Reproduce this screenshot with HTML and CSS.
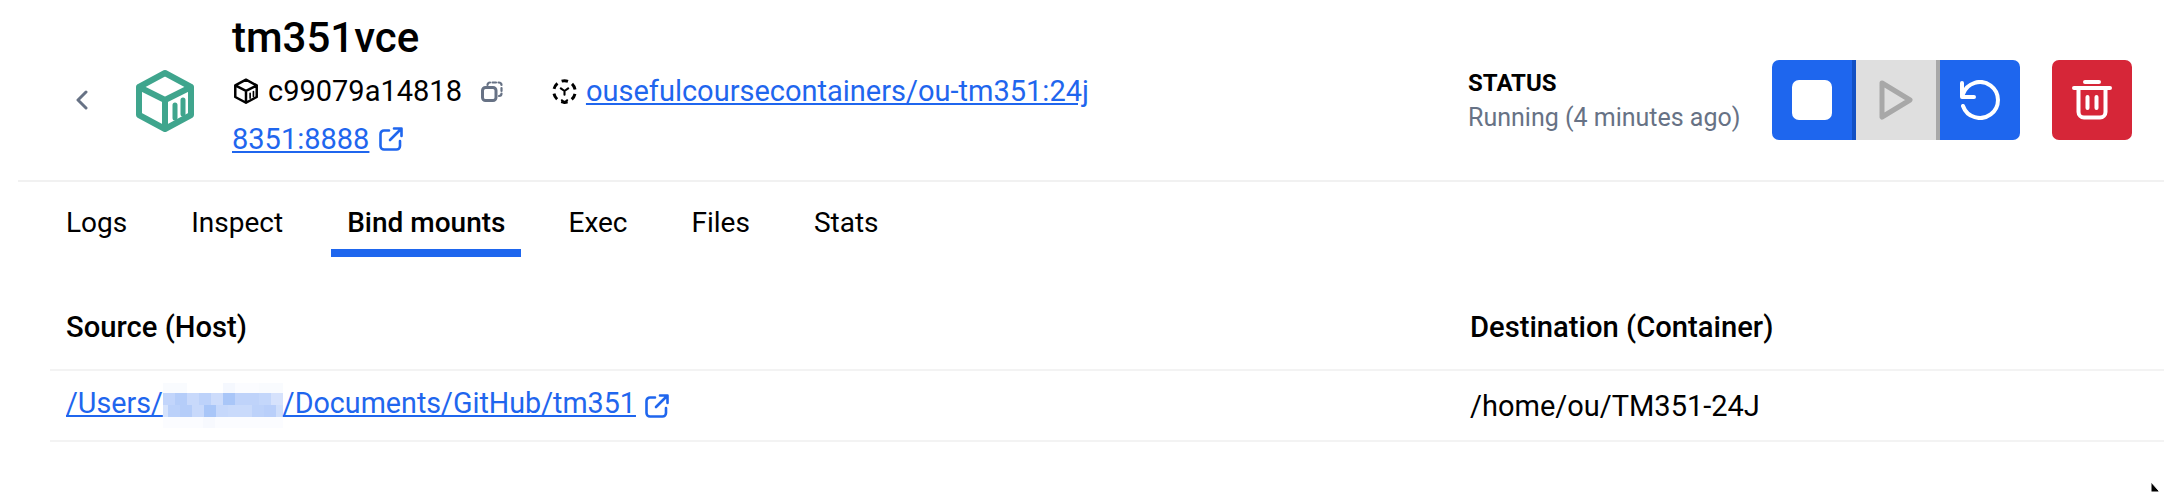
FILE: index.html
```html
<!DOCTYPE html>
<html lang="en">
<head>
	<meta charset="UTF-8">
	<title>tm351vce</title>
	<link rel="stylesheet" href="styles.css">
</head>
<body>
	<header class="top">
		<button class="back" aria-label="Back">
			<svg width="12" height="20" viewBox="0 0 12 20"><path d="M10 2 L2 10 L10 18" class="line"/></svg>
		</button>
		<svg class="box-icon" width="58" height="63" viewBox="0 0 58 63">
			<path d="M29 4 L55 18 V46 L29 60 L3 46 V18 Z M3 18 L29 31 L55 18 M29 31 V60" class="line"/>
			<path d="M39 36 V49 M47 31 V45" class="line bars"/>
		</svg>
		<div class="info">
			<h1>tm351vce</h1>
			<div class="meta">
				<svg class="cube" width="24" height="26" viewBox="0 0 58 63">
					<path d="M29 4 L55 18 V46 L29 60 L3 46 V18 Z M3 18 L29 31 L55 18 M29 31 V60" class="line"/>
					<path d="M39 37 V49 M47 33 V45" class="line thin"/>
				</svg>
				<span class="cid">c99079a14818</span>
				<svg class="copy" width="22" height="21" viewBox="0 0 22 21">
					<rect x="1.5" y="6.5" width="13.5" height="13" rx="3" class="line"/>
					<path d="M6.5 4 Q6.7 1.5 9 1.5 M11.5 1.5 H15 M17.5 1.5 Q20.5 1.5 20.5 4 M20.5 7 V10 M20.5 12.5 Q20.5 15 18 15" class="line dash-back"/>
				</svg>
				<svg class="ref" width="25" height="25" viewBox="0 0 24 24">
					<circle cx="12" cy="12" r="10.3" class="line dashed"/>
					<path d="M8.5 9 L12 11.5 L15.5 9 M12 11.5 V15 M9.5 20.5 L12 23 L14.5 20.5" class="line thin"/>
				</svg>
				<a href="#">ousefulcoursecontainers/ou-tm351:24j</a>
			</div>
			<div class="ports">
				<a href="#">8351:8888</a>
				<svg class="ext" width="24" height="24" viewBox="0 0 24 24"><use href="#ext-mark"/></svg>
			</div>
		</div>
		<div class="status">
			<strong>STATUS</strong>
			<span>Running (4 minutes ago)</span>
		</div>
		<div class="actions">
			<button class="seg stop" aria-label="Stop"><span class="square"></span></button>
			<button class="seg play" aria-label="Start">
				<svg width="36" height="42" viewBox="0 0 36 42"><path d="M4 4 L32 21 L4 38 Z" class="line"/></svg>
			</button>
			<button class="seg restart" aria-label="Restart">
				<svg width="42" height="40" viewBox="0 0 42 40"><path d="M4 14 A18 18 0 1 1 4 26 M3 3 V17 H15" class="line"/></svg>
			</button>
		</div>
		<button class="trash" aria-label="Delete">
			<svg width="40" height="40" viewBox="0 0 40 40"><path d="M2 8 H38 M13 2 H27 M6.5 8 V32 A5.5 5.5 0 0 0 12 37.5 H28 A5.5 5.5 0 0 0 33.5 32 V8 M15.5 17 V28 M24.5 17 V28" class="line"/></svg>
		</button>
	</header>

	<nav class="tabs">
		<a href="#">Logs</a>
		<a href="#">Inspect</a>
		<a href="#" class="active">Bind mounts</a>
		<a href="#">Exec</a>
		<a href="#">Files</a>
		<a href="#">Stats</a>
	</nav>

	<section class="mounts">
		<div class="row head">
			<div>Source (Host)</div>
			<div>Destination (Container)</div>
		</div>
		<div class="row">
			<div class="src">
				<a href="#">/Users/<span class="blur"></span>/Documents/GitHub/tm351</a>
				<svg class="ext" width="24" height="24" viewBox="0 0 24 24"><use href="#ext-mark"/></svg>
			</div>
			<div>/home/ou/TM351-24J</div>
		</div>
	</section>

	<svg class="cursor" width="12" height="10" viewBox="0 0 12 10"><path d="M1 0 L9 9 V10 H1 Z" fill="#000" stroke="#fff"/></svg>

	<svg width="0" height="0" class="defs">
		<symbol id="ext-mark" viewBox="0 0 24 24">
			<path d="M10 3.5 H5 A3.5 3.5 0 0 0 1.5 7 V19 A3.5 3.5 0 0 0 5 22.5 H17.5 A3.5 3.5 0 0 0 21 19 V14 M11 13 L22 2 M15 1.5 H22.5 V9" fill="none" stroke="#1f66ee" stroke-width="2.6" stroke-linecap="round" stroke-linejoin="round"/>
		</symbol>
	</svg>
</body>
</html>
```

FILE: styles.css
```css
* {
	box-sizing: border-box;
}
body {
	margin: 0;
	background: #fff;
	color: #000;
	font-family: Roboto, "Liberation Sans", sans-serif;
	font-size: 29px;
	overflow: hidden;
}
a {
	color: #1f66ee;
}
button {
	border: 0;
	padding: 0;
	background: none;
	display: flex;
	align-items: center;
	justify-content: center;
}
.line {
	fill: none;
	stroke: currentColor;
	stroke-width: 3;
	stroke-linecap: round;
	stroke-linejoin: round;
}

/* header */
.top {
	display: flex;
	align-items: center;
	height: 182px;
	margin-left: 18px;
	padding: 20px 32px 0 0;
	border-bottom: 2px solid #f1f1f1;
}
.back {
	width: 12px;
	margin-left: 58px;
	color: #677285;
}
.box-icon {
	margin-left: 48px;
	color: #3fa58d;
}
.box-icon .line {
	stroke-width: 6;
}
.box-icon .bars {
	stroke-width: 5;
}
.info {
	align-self: flex-start;
	width: 1236px;
	margin: -6px 0 0 38px;
}
h1 {
	margin: 0 0 5px;
	font-size: 42px;
	font-weight: 500;
	line-height: 48px;
}
.meta, .ports {
	display: flex;
	align-items: center;
	height: 48px;
}
.cube {
	margin: 0 10px 0 2px;
}
.cube .line {
	stroke-width: 6;
}
.cube .thin {
	stroke-width: 4;
}
.copy {
	margin-left: 19px;
	color: #677285;
}
.copy .dash-back {
	stroke-width: 2.2;
}
.ref {
	margin: 0 9px 0 49px;
}
.ref .dashed {
	stroke-width: 2.8;
	stroke-linecap: butt;
	stroke-dasharray: 6.2 4.58;
	stroke-dashoffset: -2.3;
}
.ref .thin {
	stroke-width: 2;
}
.ext {
	flex: none;
}
.ports .ext {
	margin-left: 10px;
}
.status {
	display: flex;
	flex-direction: column;
	gap: 6px;
	width: 304px;
}
.status strong {
	font-size: 24px;
	font-weight: 700;
}
.status span {
	font-size: 25px;
	color: #677285;
}
.actions {
	display: flex;
	height: 80px;
	border-radius: 7px;
	overflow: hidden;
}
.seg {
	width: 84px;
	background: #1e66ee;
	color: #fff;
	border-right: 4px solid #1250c4;
}
.seg.play {
	background: #dfdfdf;
	color: #a8a8a8;
	border-right-color: #a8a8a8;
}
.seg.play .line {
	stroke-width: 5;
}
.seg.restart {
	width: 80px;
	border-right: 0;
}
.seg.restart .line {
	stroke-width: 4;
}
.square {
	width: 40px;
	height: 40px;
	border-radius: 7px;
	background: #fff;
}
.trash {
	width: 80px;
	height: 80px;
	margin-left: 32px;
	border-radius: 7px;
	background: #d62638;
	color: #fff;
}
.trash .line {
	stroke-width: 4;
}

/* tabs */
.tabs {
	display: flex;
	gap: 32px;
	height: 75px;
	padding-left: 50px;
	font-size: 28px;
}
.tabs a {
	padding: 23px 16px 0;
	line-height: 36px;
	color: #000;
	text-decoration: none;
	border-bottom: 8px solid transparent;
}
.tabs a.active {
	margin-right: -1px;
	font-weight: 500;
	border-bottom-color: #1e66ee;
}

/* bind mounts table */
.mounts {
	margin-left: 50px;
}
.row {
	display: grid;
	grid-template-columns: 1404px 1fr;
	align-items: center;
	height: 71px;
	padding-left: 16px;
	border-bottom: 2px solid #f3f3f3;
}
.row.head {
	height: 114px;
	padding-top: 28px;
	font-size: 29.2px;
	font-weight: 500;
}
.src {
	display: flex;
	align-items: center;
	gap: 9px;
	font-size: 28.7px;
}
.blur {
	display: inline-block;
	width: 120px;
	height: 45px;
	vertical-align: middle;
	background-repeat: no-repeat;
	background-size: 100% 10px, 100% 12px, 100% 12px, 100% 11px;
	background-position: 0 0, 0 10px, 0 22px, 0 34px;
	background-image:
		linear-gradient(90deg, #f9fbfe 0 24px, #fff 24px 60px, #f5f8fe 60px 72px, #fbfcff 72px 96px, #f9fbfe 96px),
		linear-gradient(90deg, #c2d5fb 0 12px, #b5cdf9 12px 24px, #c8d9fb 24px 36px, #bdd2fa 36px 48px, #cddcfb 48px 60px, #a9c6f8 60px 72px, #bfd3fa 72px 96px, #c4d7fb 96px 108px, #d6e2fc 108px),
		linear-gradient(90deg, #d6e3fc 0 5px, #bbd1fa 5px 17px, #b5cdf9 17px 29px, #c8d9fb 29px 41px, #a9c6f8 41px 53px, #c6d8fb 53px 65px, #c9dafb 65px 89px, #bdd2fa 89px 101px, #b9cffa 101px 113px, #cfdefb 113px),
		linear-gradient(90deg, #fbfcff 0 40px, #f7f9fe 40px 52px, #fbfcff 52px);
}

.cursor {
	position: absolute;
	left: 2150px;
	top: 482px;
}
.defs {
	position: absolute;
}
```
